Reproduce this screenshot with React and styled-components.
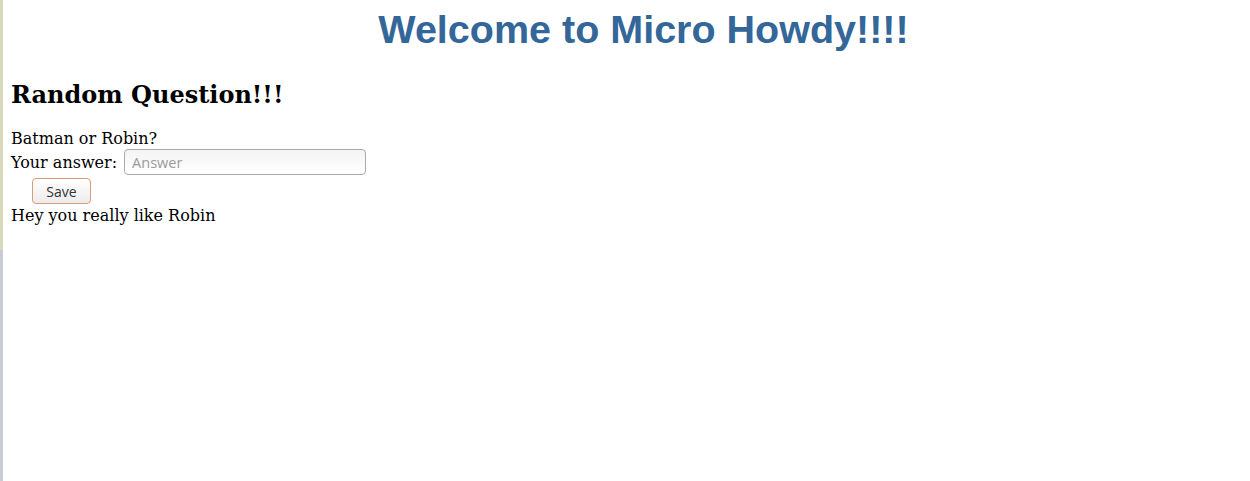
import React from "react";
import styled, { createGlobalStyle } from "styled-components";

const GlobalStyle = createGlobalStyle`
  html, body {
    margin: 0;
    padding: 0;
    background: #ffffff;
  }
  body {
    font-family: "DejaVu Serif", serif;
    font-size: 16px;
    color: #000;
  }
`;

const Shell = styled.div`
  display: flex;
  min-height: 481px;
`;

const SideStrip = styled.div`
  width: 3px;
  flex: none;
  background: linear-gradient(
    to bottom,
    #d8d8bc 0px,
    #d8d8bc 250px,
    #c8ccd4 250px,
    #c8ccd4 100%
  );
`;

const Page = styled.main`
  flex: 1;
  padding: 0 8px;
`;

const Title = styled.h1`
  font-family: "Liberation Sans", Arial, sans-serif;
  font-size: 39.5px;
  font-weight: bold;
  color: #336699;
  text-align: center;
  margin: 6px 0 0;
  padding-left: 34px;
  line-height: 46px;
`;

const QuestionHeading = styled.h2`
  font-size: 24px;
  font-weight: bold;
  margin: 28px 0 18px;
`;

const Line = styled.div`
  line-height: 23px;
`;

const AnswerRow = styled.div`
  display: flex;
  align-items: center;
  gap: 7px;
  height: 24px;
`;

const AnswerInput = styled.input`
  width: 242px;
  height: 26px;
  box-sizing: border-box;
  border: 1px solid #aaaaaa;
  border-radius: 4px;
  background: linear-gradient(to bottom, #f4f4f4, #ffffff);
  padding: 2px 7px;
  font-family: "Open Sans", sans-serif;
  font-size: 14.5px;
  color: #333;
  outline: none;

  &::placeholder {
    color: #9a9a9a;
  }
`;

const ButtonRow = styled.div`
  padding: 4px 0 0 21px;
  height: 26px;
`;

const SaveButton = styled.button`
  width: 59px;
  height: 26px;
  padding: 0;
  border: 1px solid #dd9a78;
  border-radius: 4px;
  background: linear-gradient(to bottom, #ffffff, #ececec);
  font-family: "Open Sans", sans-serif;
  font-size: 14px;
  color: #333;
  cursor: pointer;
`;

export default function App() {
  return (
    <>
      <GlobalStyle />
      <Shell>
        <SideStrip />
        <Page>
          <Title>Welcome to Micro Howdy!!!!</Title>
          <QuestionHeading>Random Question!!!</QuestionHeading>
          <Line>Batman or Robin?</Line>
          <AnswerRow>
            <span>Your answer:</span>
            <AnswerInput placeholder="Answer" />
          </AnswerRow>
          <ButtonRow>
            <SaveButton>Save</SaveButton>
          </ButtonRow>
          <Line>Hey you really like Robin</Line>
        </Page>
      </Shell>
    </>
  );
}
